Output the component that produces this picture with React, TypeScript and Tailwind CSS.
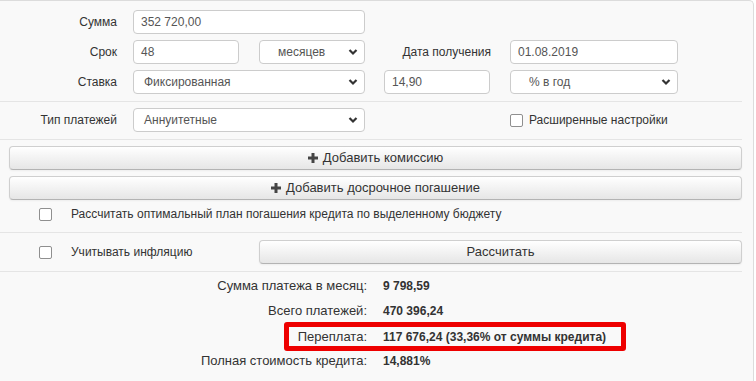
import React from 'react'

const font = { fontFamily: '"Liberation Sans", Arial, sans-serif' }

function Chevron() {
	return (
		<svg width="10" height="8" viewBox="0 0 10 8" className="absolute right-[6px] top-1/2 -translate-y-1/2">
			<path d="M1.5 2 L5 5.5 L8.5 2" fill="none" stroke="#333" strokeWidth="2.2" />
		</svg>
	)
}

function Input({ value, w }: { value: string; w: string }) {
	return (
		<div className={`${w} h-[24px] bg-white border border-[#cccccc] rounded-[4px] pl-[7px] flex items-center text-[12px] text-[#555]`}>
			{value}
		</div>
	)
}

function Select({ value, w, pl }: { value: string; w: string; pl: string }) {
	return (
		<div className={`${w} ${pl} relative h-[24px] bg-white border border-[#cccccc] rounded-[4px] flex items-center text-[12px] text-[#555]`}>
			{value}
			<Chevron />
		</div>
	)
}

function Box() {
	return <div className="w-[13px] h-[13px] bg-white border border-[#8f8f8f] rounded-[2px]" />
}

function Plus() {
	return (
		<svg width="10" height="10" viewBox="0 0 10 10" className="mr-[5px]">
			<path d="M3.5 0 H6.5 V3.5 H10 V6.5 H6.5 V10 H3.5 V6.5 H0 V3.5 H3.5 Z" fill="#444" />
		</svg>
	)
}

function Btn({ children, cls }: { children: React.ReactNode; cls: string }) {
	return (
		<div className={`${cls} h-[24px] flex items-center justify-center rounded-[4px] border border-[#cfcfcf] border-b-[#b3b3b3] bg-gradient-to-b from-white to-[#e6e6e6] text-[13px] text-[#333] shadow-[0_1px_2px_rgba(0,0,0,0.05)]`}>
			{children}
		</div>
	)
}

function Divider() {
	return <div className="h-px bg-[#e5e5e5] mr-[11px]" />
}

function Label({ text, w }: { text: string; w: string }) {
	return <div className={`${w} text-right text-[12px] text-[#333]`}>{text}</div>
}

function Result({ label, value }: { label: string; value: string }) {
	return (
		<div className="flex items-center h-[22px] text-[#333] whitespace-nowrap">
			<div className="w-[367px] text-right text-[13px]">{label}</div>
			<div className="ml-[16px] font-bold text-[12px]">{value}</div>
		</div>
	)
}

export default function App() {
	return (
		<div className="w-[756px] h-[381px] bg-white overflow-hidden" style={font}>
			<div className="w-[754px] h-[381px] bg-[#f9f9f9] border-t border-r border-[#dcdcdc] rounded-tr-[5px]">
				<div className="pt-[9px] flex flex-col gap-[6px]">
					<div className="flex items-center">
						<Label text="Сумма" w="w-[117px]" />
						<div className="ml-[16px]"><Input value="352 720,00" w="w-[232px]" /></div>
					</div>
					<div className="flex items-center">
						<Label text="Срок" w="w-[117px]" />
						<div className="ml-[16px] flex gap-[20px]">
							<Input value="48" w="w-[106px]" />
							<Select value="месяцев" w="w-[106px]" pl="pl-[18px]" />
						</div>
						<Label text="Дата получения" w="w-[126px]" />
						<div className="ml-[19px]"><Input value="01.08.2019" w="w-[168px]" /></div>
					</div>
					<div className="flex items-center">
						<Label text="Ставка" w="w-[117px]" />
						<div className="ml-[16px] flex gap-[19px]">
							<Select value="Фиксированная" w="w-[232px]" pl="pl-[10px]" />
							<Input value="14,90" w="w-[106px]" />
							<div className="ml-px"><Select value="% в год" w="w-[168px]" pl="pl-[18px]" /></div>
						</div>
					</div>
				</div>
				<div className="mt-[7px]"><Divider /></div>
				<div className="flex items-center h-[24px] mt-[6px]">
					<Label text="Тип платежей" w="w-[117px]" />
					<div className="ml-[16px]"><Select value="Аннуитетные" w="w-[232px]" pl="pl-[10px]" /></div>
					<div className="ml-[145px] flex items-center gap-[6px] text-[12px] text-[#333]">
						<Box />
						<span>Расширенные настройки</span>
					</div>
				</div>
				<div className="mt-[7px]"><Divider /></div>
				<div className="flex flex-col gap-[6px] mt-[6px] pl-[9px] pr-[11px]">
					<Btn cls="w-full"><Plus />Добавить комиссию</Btn>
					<Btn cls="w-full"><Plus />Добавить досрочное погашение</Btn>
				</div>
				<div className="flex items-center h-[28px] pl-[39px] text-[12px] text-[#333]">
					<Box />
					<span className="ml-[19px]">Рассчитать оптимальный план погашения кредита по выделенному бюджету</span>
				</div>
				<div className="mt-[4px]"><Divider /></div>
				<div className="flex items-center mt-[7px] h-[24px] text-[12px] text-[#333]">
					<div className="pl-[39px] flex items-center w-[259px]">
						<Box />
						<span className="ml-[19px]">Учитывать инфляцию</span>
					</div>
					<Btn cls="w-[483px]">Рассчитать</Btn>
				</div>
				<div className="mt-[7px]"><Divider /></div>
				<div className="pt-[3px] flex flex-col">
					<Result label="Сумма платежа в месяц:" value="9 798,59" />
					<div className="mt-[3px]"><Result label="Всего платежей:" value="470 396,24" /></div>
					<div className="ml-[284px] w-[342px] h-[29px] border-[5px] border-[#ee0000] rounded-[3px] flex items-center text-[#333] whitespace-nowrap">
						<div className="w-[78px] text-right text-[13px]">Переплата:</div>
						<div className="ml-[16px] font-bold text-[12px]">117 676,24 (33,36% от суммы кредита)</div>
					</div>
					<div className="-mt-px"><Result label="Полная стоимость кредита:" value="14,881%" /></div>
				</div>
			</div>
		</div>
	)
}
